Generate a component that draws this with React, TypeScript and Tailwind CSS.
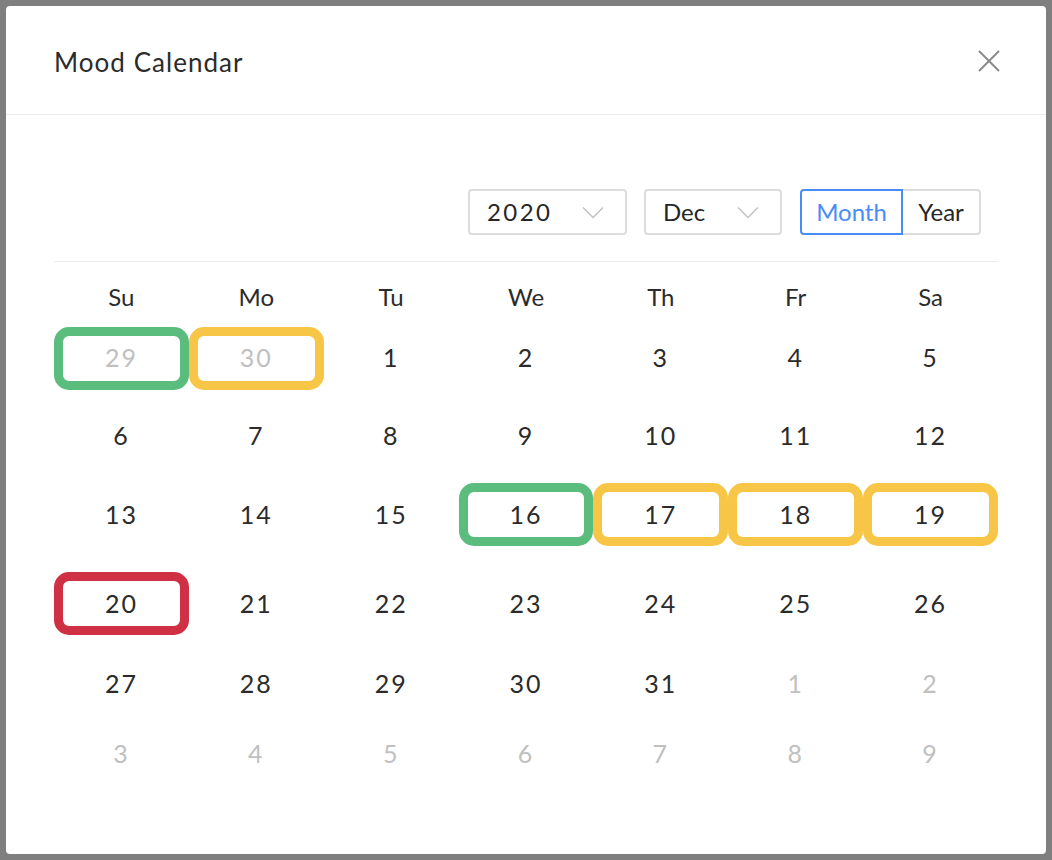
import React from "react";

type Mood = "good" | "ok" | "bad";

interface Day {
  n: number;
  muted?: boolean;
  mood?: Mood;
}

const moodBorder: Record<Mood, string> = {
  good: "border-[#5abd7e]",
  ok: "border-[#f8c646]",
  bad: "border-[#cf3044]",
};

const weekdays = ["Su", "Mo", "Tu", "We", "Th", "Fr", "Sa"];

const rows: { height: string; days: Day[] }[] = [
  {
    height: "h-[88px]",
    days: [
      { n: 29, muted: true, mood: "good" },
      { n: 30, muted: true, mood: "ok" },
      { n: 1 },
      { n: 2 },
      { n: 3 },
      { n: 4 },
      { n: 5 },
    ],
  },
  {
    height: "h-[68px]",
    days: [6, 7, 8, 9, 10, 11, 12].map((n) => ({ n })),
  },
  {
    height: "h-[89px]",
    days: [
      { n: 13 },
      { n: 14 },
      { n: 15 },
      { n: 16, mood: "good" },
      { n: 17, mood: "ok" },
      { n: 18, mood: "ok" },
      { n: 19, mood: "ok" },
    ],
  },
  {
    height: "h-[89px]",
    days: [
      { n: 20, mood: "bad" },
      { n: 21 },
      { n: 22 },
      { n: 23 },
      { n: 24 },
      { n: 25 },
      { n: 26 },
    ],
  },
  {
    height: "h-[72px]",
    days: [
      { n: 27 },
      { n: 28 },
      { n: 29 },
      { n: 30 },
      { n: 31 },
      { n: 1, muted: true },
      { n: 2, muted: true },
    ],
  },
  {
    height: "h-[68px]",
    days: [3, 4, 5, 6, 7, 8, 9].map((n) => ({ n, muted: true })),
  },
];

const Chevron = () => (
  <svg width="22" height="13" viewBox="0 0 22 13" fill="none">
    <polyline
      points="1,1.5 11,11.5 21,1.5"
      stroke="#c4c4c4"
      strokeWidth="1.6"
      strokeLinejoin="round"
    />
  </svg>
);

const Select = ({
  value,
  width,
  digits,
}: {
  value: string;
  width: string;
  digits?: boolean;
}) => (
  <div
    className={`${width} h-[46px] flex items-center justify-between pl-[17px] pr-[21px] border-2 border-[#dcdcdc] rounded-[4px] text-[24px] text-[#262626]`}
  >
    <span className={digits ? "tracking-[0.1em]" : ""}>{value}</span>
    <Chevron />
  </div>
);

const DayCell = ({ day }: { day: Day }) => {
  const color = day.muted ? "text-[#c0c0c0]" : "text-[#2b2b2b]";
  if (day.mood) {
    return (
      <div className="flex items-center justify-center">
        <div
          className={`w-full h-[63px] rounded-[15px] border-[9px] ${moodBorder[day.mood]} flex items-center justify-center text-[25px] tracking-[0.08em] ${color}`}
        >
          {day.n}
        </div>
      </div>
    );
  }
  return (
    <div
      className={`flex items-center justify-center text-[25px] tracking-[0.08em] ${color}`}
    >
      {day.n}
    </div>
  );
};

const App: React.FC = () => {
  return (
    <div
      className="w-[1052px] h-[860px] bg-[#7f7f7f] p-[6px]"
      style={{ fontFamily: "Lato, 'Noto Sans', sans-serif" }}
    >
      <div className="w-[1040px] h-[848px] bg-white rounded-[4px] flex flex-col">
        {/* header */}
        <div className="h-[109px] flex items-center justify-between pl-[48px] pr-[45px] border-b border-[#ececec]">
          <h2 className="text-[26px] tracking-[0.04em] text-[#2b2b2b] pt-[4px]">
            Mood Calendar
          </h2>
          <svg width="24" height="24" viewBox="0 0 24 24" fill="none" className="mt-[2px]">
            <line x1="2" y1="2" x2="22" y2="22" stroke="#8a8a8a" strokeWidth="2" />
            <line x1="22" y1="2" x2="2" y2="22" stroke="#8a8a8a" strokeWidth="2" />
          </svg>
        </div>

        {/* body */}
        <div className="px-[48px] pt-[74px]">
          <div className="flex justify-end items-center pr-[17px] pb-[26px] border-b border-[#ececec]">
            <Select value="2020" width="w-[159px]" digits />
            <div className="ml-[17px]">
              <Select value="Dec" width="w-[138px]" />
            </div>
            <div className="ml-[18px] flex h-[46px] text-[24px]">
              <div className="w-[103px] flex items-center justify-center border-2 border-[#4a8cf7] rounded-l-[4px] text-[#4a8cf7]">
                Month
              </div>
              <div className="w-[78px] flex items-center justify-center border-2 border-l-0 border-[#dcdcdc] rounded-r-[4px] text-[#262626]">
                Year
              </div>
            </div>
          </div>

          <div className="grid grid-cols-7 pt-[22px] pb-[5px] text-[24px] text-[#2b2b2b]">
            {weekdays.map((w) => (
              <div key={w} className="h-[25px] flex items-center justify-center">
                {w}
              </div>
            ))}
          </div>

          {rows.map((row, i) => (
            <div key={i} className={`grid grid-cols-7 ${row.height}`}>
              {row.days.map((d, j) => (
                <DayCell key={j} day={d} />
              ))}
            </div>
          ))}
        </div>
      </div>
    </div>
  );
};

export default App;
